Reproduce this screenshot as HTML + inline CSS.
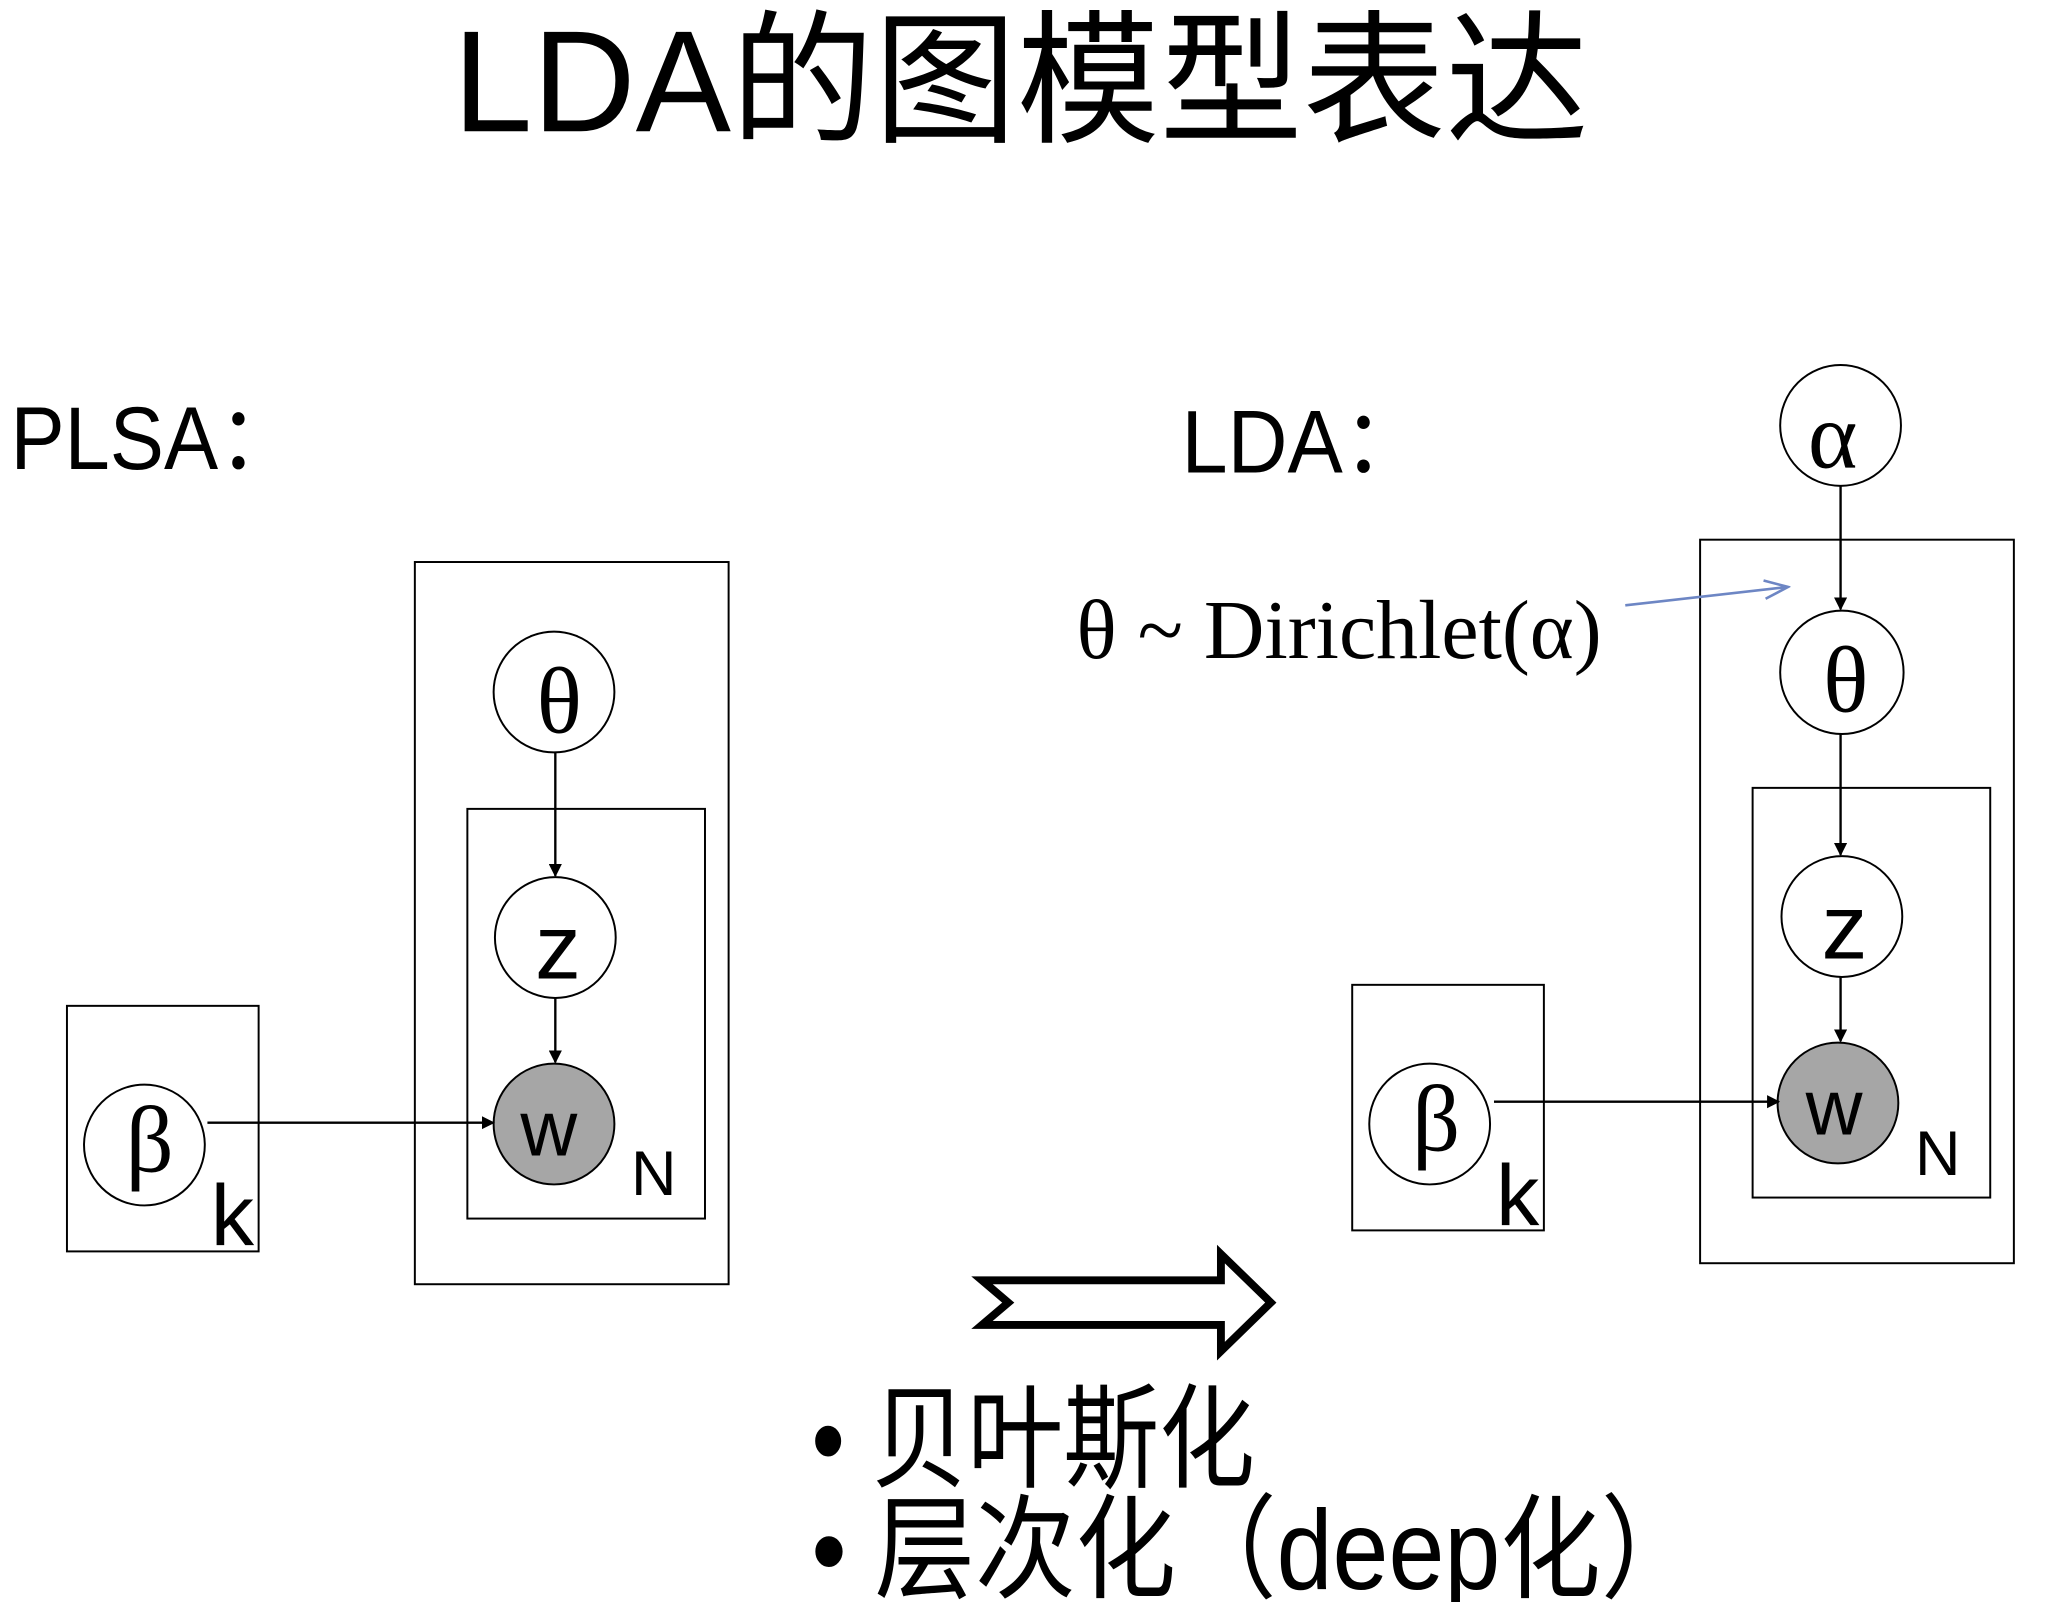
<!DOCTYPE html>
<html><head><meta charset="utf-8"><style>
html,body{margin:0;padding:0;background:#fff;width:2048px;height:1602px;overflow:hidden}
svg{display:block}
.s{font-family:"Liberation Sans","Noto Sans CJK SC",sans-serif}
.r{font-family:"Liberation Serif","DejaVu Serif",serif}
</style></head><body>
<svg width="2048" height="1602" viewBox="0 0 1560 1220" preserveAspectRatio="none">
<defs><marker id="a" markerWidth="10" markerHeight="10" refX="9" refY="5" orient="auto" markerUnits="userSpaceOnUse"><path d="M0,0 L10,5 L0,10z" fill="#000"/></marker>
<marker id="b" markerWidth="22" markerHeight="16" refX="20" refY="8" orient="auto" markerUnits="userSpaceOnUse"><path d="M2,1 L20,8 L2,15" fill="none" stroke="#6d86c4" stroke-width="2"/></marker></defs>
<text x="345" y="100" class="s" font-size="110" textLength="865" lengthAdjust="spacingAndGlyphs">LDA的图模型表达</text>
<text x="8" y="357" class="s" font-size="68" textLength="220" lengthAdjust="spacingAndGlyphs">PLSA：</text>
<text x="900" y="360" class="s" font-size="68" textLength="186" lengthAdjust="spacingAndGlyphs">LDA：</text>
<g fill="none" stroke="#000" stroke-width="1.5">
<rect x="316" y="428" width="239" height="550"/><rect x="356" y="616" width="181" height="312"/>
<rect x="51" y="766" width="146" height="187"/>
<rect x="1295" y="411" width="239" height="551"/><rect x="1335" y="600" width="181" height="312"/>
<rect x="1030" y="750" width="146" height="187"/>
</g>
<g stroke="#000" stroke-width="1.5" fill="#fff">
<circle cx="422" cy="527" r="46"/><circle cx="423" cy="714" r="46"/><circle cx="422" cy="856" r="46" fill="#a6a6a6"/>
<circle cx="110" cy="872" r="46"/>
<circle cx="1402" cy="324" r="46"/><circle cx="1403" cy="512" r="47"/><circle cx="1403" cy="698" r="46"/><circle cx="1400" cy="840" r="46" fill="#a6a6a6"/>
<circle cx="1089" cy="856" r="46"/>
</g>
<g stroke="#000" stroke-width="1.8" marker-end="url(#a)">
<line x1="423" y1="573" x2="423" y2="667"/><line x1="423" y1="760" x2="423" y2="809"/>
<line x1="158" y1="855" x2="376" y2="855"/>
<line x1="1402" y1="370" x2="1402" y2="464"/><line x1="1402" y1="559" x2="1402" y2="651"/><line x1="1402" y1="744" x2="1402" y2="793"/>
<line x1="1138" y1="839" x2="1355" y2="839"/>
</g>
<line x1="1238" y1="461" x2="1362" y2="447" stroke="#6d86c4" stroke-width="2" marker-end="url(#b)"/>
<g class="r" font-size="72" text-anchor="middle">
<text x="426" y="558">θ</text><text x="114" y="892">β</text>
<text x="1396" y="356">α</text><text x="1406" y="542">θ</text><text x="1094" y="876">β</text>
</g>
<g class="s" text-anchor="middle">
<text x="425" y="745" font-size="70">z</text><text x="418" y="880" font-size="60">w</text>
<text x="1405" y="730" font-size="70">z</text><text x="1397" y="864" font-size="60">w</text>
<text x="498" y="910" font-size="48">N</text><text x="1476" y="895" font-size="48">N</text>
<text x="177" y="948" font-size="66">k</text><text x="1156" y="933" font-size="66">k</text>
</g>
<text x="820" y="501" class="r" font-size="64" textLength="400" lengthAdjust="spacingAndGlyphs">θ ~ Dirichlet(α)</text>
<path d="M748,975 L930,975 L930,955 L968,992 L930,1029 L930,1009 L748,1009 L768,992 Z" fill="none" stroke="#000" stroke-width="6" stroke-linejoin="miter"/>
<text x="618" y="1126" class="s" font-size="86" textLength="338" lengthAdjust="spacingAndGlyphs">• 贝叶斯化</text>
<text x="618" y="1210" class="s" font-size="86" textLength="678" lengthAdjust="spacingAndGlyphs">• 层次化（deep化）</text>
</svg>
</body></html>
